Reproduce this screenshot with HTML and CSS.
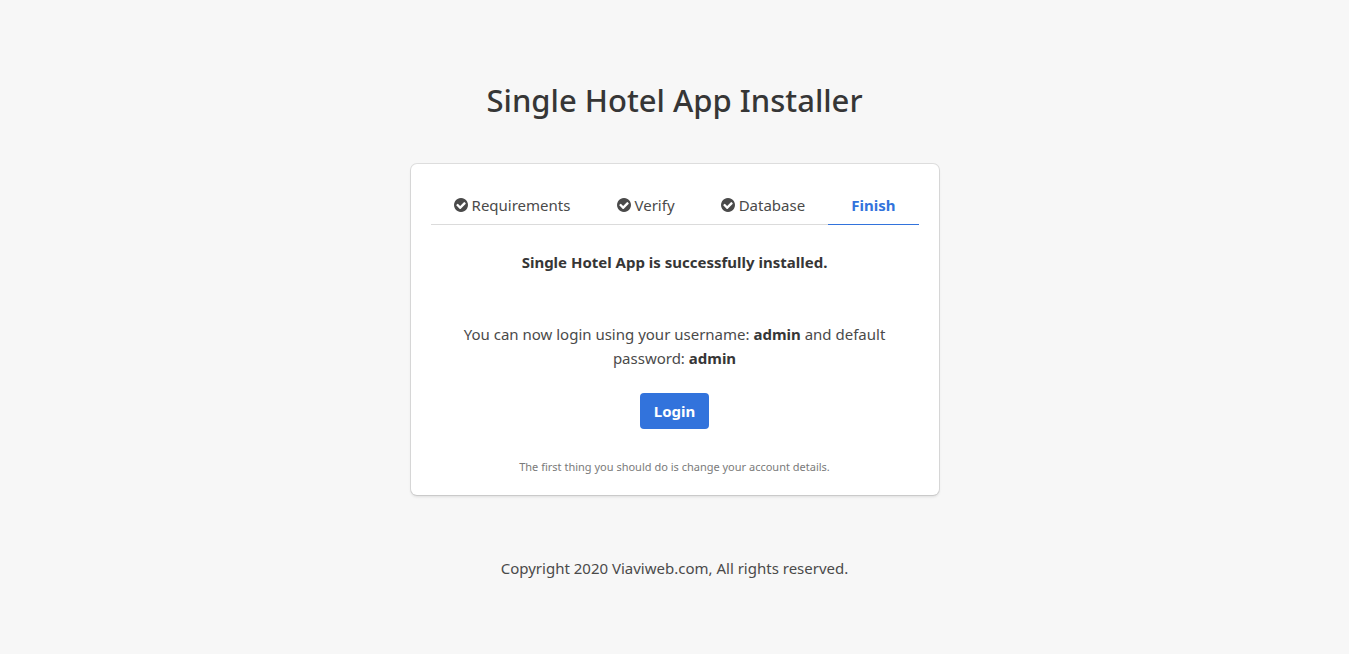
FILE: index.html
```html
<!DOCTYPE html>
<html lang="en">
<head>
<meta charset="utf-8">
<meta name="viewport" content="width=device-width, initial-scale=1">
<title>Single Hotel App Installer</title>
<link rel="stylesheet" href="styles.css">
</head>
<body>
<svg class="sprite" aria-hidden="true"><symbol id="check" viewBox="128 128 1536 1536"><path d="M1412 734q0-28-18-46l-91-90q-19-19-45-19t-45 19l-408 407-226-226q-19-19-45-19t-45 19l-91 90q-18 18-18 46 0 27 18 45l362 362q19 19 45 19 27 0 46-19l543-543q18-18 18-45zm252 162q0 209-103 385.500t-279.500 279.500-385.500 103-385.500-103-279.500-279.500-103-385.500 103-385.500 279.500-279.500 385.500-103 385.500 103 279.500 279.500 103 385.500z"/></symbol></svg>
<main class="installer">
  <h1 class="title">Single Hotel App Installer</h1>
  <section class="box">
    <nav class="tabs">
      <ul class="tab-list">
        <li class="tab"><svg class="icon" aria-hidden="true"><use href="#check"/></svg><span>Requirements</span></li>
        <li class="tab"><svg class="icon" aria-hidden="true"><use href="#check"/></svg><span>Verify</span></li>
        <li class="tab"><svg class="icon" aria-hidden="true"><use href="#check"/></svg><span>Database</span></li>
        <li class="tab active" aria-current="step">Finish</li>
      </ul>
    </nav>
    <p class="success"><strong>Single Hotel App is successfully installed.</strong></p>
    <p class="message">You can now login using your username: <strong>admin</strong> and default password: <strong>admin</strong></p>
    <a class="button" href="#">Login</a>
    <p class="help">The first thing you should do is change your account details.</p>
  </section>
  <footer class="footer">Copyright 2020 Viaviweb.com, All rights reserved.</footer>
</main>
</body>
</html>
```
FILE: styles.css
```css
* { box-sizing: border-box; }
body {
  margin: 0;
  min-height: 100vh;
  background: #f7f7f7;
  color: #4a4a4a;
  font: 15px/24px "Noto Sans", "Open Sans", sans-serif;
}
h1, p, ul { margin: 0; padding: 0; }
strong { color: #363636; }
.sprite { position: absolute; width: 0; height: 0; }
.installer {
  width: 100%;
  max-width: 528px;
  margin: 0 auto;
  padding-top: 82px;
  text-align: center;
}
.title {
  margin-bottom: 46px;
  color: #363636;
  font-size: 31px;
  line-height: 36px;
  font-weight: 500;
}
.box {
  padding: 23px 20px 20px;
  background: #fff;
  border-radius: 6px;
  box-shadow: 0 2px 3px rgba(10, 10, 10, .1), 0 0 0 1px rgba(10, 10, 10, .1);
}
.tab-list {
  display: flex;
  list-style: none;
  border-bottom: 1px solid #dbdbdb;
}
.tab {
  display: flex;
  flex: 1 1 auto;
  align-items: center;
  justify-content: center;
  gap: 4px;
  margin-bottom: -1px;
  padding: 6px 16px 7px;
  border-bottom: 1px solid transparent;
}
.active {
  border-bottom-color: #3273dc;
  color: #3273dc;
  font-weight: 700;
}
.icon { width: 14px; height: 14px; fill: currentColor; }
.success { margin: 25px 0 48px; }
.message { margin-bottom: 23px; padding: 0 24px; }
.button {
  display: inline-block;
  padding: 6px 14px;
  border-radius: 4px;
  background: #3273dc;
  color: #fff;
  font-weight: 700;
  text-decoration: none;
}
.help { margin-top: 30px; color: #7a7a7a; font-size: 11px; line-height: 16px; }
.footer { padding: 61px 0 48px; }
```
